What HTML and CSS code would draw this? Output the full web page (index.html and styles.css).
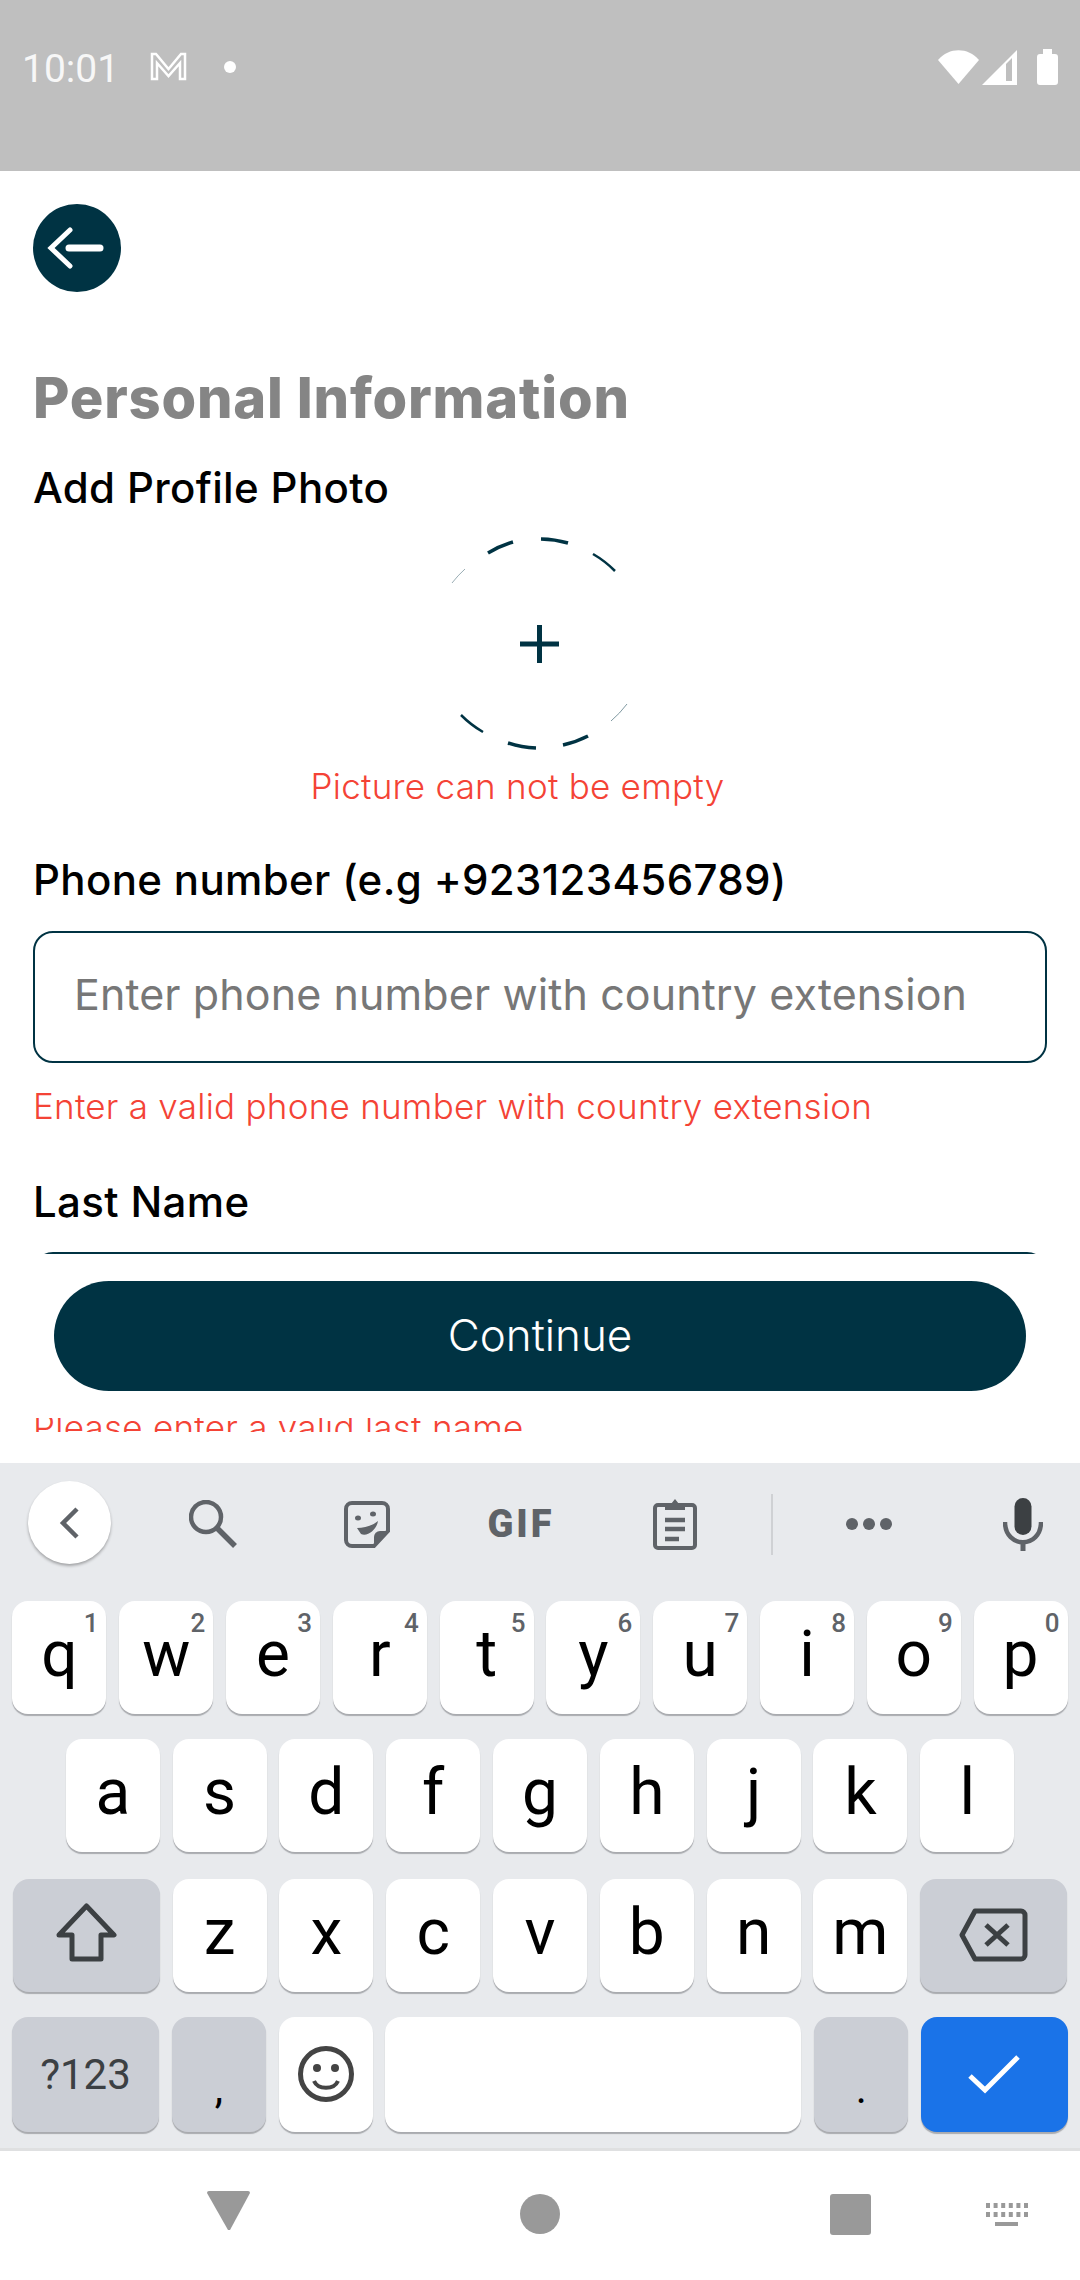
FILE: index.html
```html
<!DOCTYPE html>
<html lang="en">
<head>
    <meta charset="UTF-8">
    <meta name="viewport" content="width=device-width, initial-scale=1.0">
    <title>Personal Information</title>
    <link rel="stylesheet" href="styles.css">
</head>
<body>
<div class="screen">

    <!-- Status bar -->
    <div class="status">
        <span class="time">10:01</span>
        <svg class="gmail" width="37" height="29" viewBox="0 0 37 29"><path d="M2 2H6L18.500 17 31 2H35V27H30V11L18.500 24 7 11V27H2Z" fill="none" stroke="#fff" stroke-width="2.500"/></svg>
        <span class="status-dot"></span>
        <svg class="wifi" width="41" height="34" viewBox="0 0 41 34"><path d="M0 10C11-3 30-3 41 10L20.500 34Z" fill="#fff"/></svg>
        <svg class="signal" width="35" height="35" viewBox="0 0 35 35"><path d="M35 0V35H0Z" fill="#fff"/><path d="M24 14L30 8V31H24Z" fill="#bfbfbf"/></svg>
        <svg class="battery" width="21" height="36" viewBox="0 0 21 36"><path d="M6 0H15V5H18a3 3 0 0 1 3 3V33a3 3 0 0 1-3 3H3a3 3 0 0 1-3-3V8a3 3 0 0 1 3-3H6Z" fill="#fff"/></svg>
    </div>

    <!-- Form -->
    <div class="form">
        <div class="back-btn">
            <svg width="88" height="88" viewBox="0 0 88 88"><path d="M37 26L18 44 37 62" fill="none" stroke="#fff" stroke-width="5" stroke-linecap="round"/><path d="M36 44H67" stroke="#fff" stroke-width="7" stroke-linecap="round"/></svg>
        </div>
        <h1 class="title">Personal Information</h1>
        <div class="label label-photo">Add Profile Photo</div>
        <div class="photo">
            <svg width="280" height="260" viewBox="0 0 280 260">
                <g fill="none" stroke="#003343" stroke-width="3.500">
                    <path d="M88 43A105 105 0 0 1 113 32"/>
                    <path d="M141 29A105 105 0 0 1 168 33"/>
                    <path d="M193 44A105 105 0 0 1 215 61" stroke-width="2.500"/>
                    <path d="M52 73A105 105 0 0 1 65 59" stroke-width="1" opacity=".4"/>
                    <path d="M61 205A105 105 0 0 0 83 222" stroke-width="2.500"/>
                    <path d="M108 233A105 105 0 0 0 136 238"/>
                    <path d="M163 235A105 105 0 0 0 188 226"/>
                    <path d="M211 211A105 105 0 0 0 227 194" stroke-width="1" opacity=".5"/>
                </g>
                <path d="M139.500 115V153M120 134H159" stroke="#003343" stroke-width="5"/>
            </svg>
        </div>
        <div class="error error-photo">Picture can not be empty</div>
        <div class="label label-phone">Phone number (e.g +923123456789)</div>
        <div class="input">Enter phone number with country extension</div>
        <div class="error error-phone">Enter a valid phone number with country extension</div>
        <div class="label label-name">Last Name</div>
        <div class="input input-name"></div>
    </div>

    <!-- Continue -->
    <div class="footer">
        <button class="continue">Continue</button>
        <div class="clipped"><div class="error">Please enter a valid last name</div></div>
    </div>

    <!-- Keyboard -->
    <div class="keyboard">
        <div class="toolbar">
            <div class="kb-back">
                <svg width="24" height="34" viewBox="0 0 24 34"><path d="M19 3L5 17 19 31" fill="none" stroke="#5f6368" stroke-width="4.500"/></svg>
            </div>
            <div class="tool tool-search">
                <svg width="48" height="48" viewBox="0 0 48 48"><circle cx="17" cy="17" r="15" fill="none" stroke="#5f6368" stroke-width="4.500"/><path d="M28 28L46 46" stroke="#5f6368" stroke-width="5.500"/></svg>
            </div>
            <div class="tool">
                <svg width="46" height="47" viewBox="0 0 46 47"><path d="M8 2H38a6 6 0 0 1 6 6V30L30 45H8a6 6 0 0 1-6-6V8A6 6 0 0 1 8 2Z" fill="none" stroke="#5f6368" stroke-width="4"/><path d="M44 30L30 45V36a6 6 0 0 1 6-6Z" fill="#5f6368"/><ellipse cx="14" cy="17" rx="3" ry="2.500" fill="#5f6368"/><ellipse cx="29" cy="13" rx="3" ry="2.500" fill="#5f6368"/><path d="M13 27C20 27 28 25 34 20 33 28 24 36 17 33Z" fill="#5f6368"/></svg>
            </div>
            <div class="tool gif">GIF</div>
            <div class="tool">
                <svg width="44" height="52" viewBox="0 0 44 52"><rect x="2" y="7" width="40" height="43" rx="3" fill="none" stroke="#5f6368" stroke-width="4"/><path d="M12 12V6H18L22 1 26 6H32V12Z" fill="#5f6368"/><path d="M12 22H32M12 31H32M12 41H26" stroke="#5f6368" stroke-width="4.500"/></svg>
            </div>
            <div class="divider"></div>
            <div class="tool tool-dots">
                <svg width="48" height="12" viewBox="0 0 48 12"><circle cx="7" cy="6" r="6" fill="#5f6368"/><circle cx="24" cy="6" r="6" fill="#5f6368"/><circle cx="41" cy="6" r="6" fill="#5f6368"/></svg>
            </div>
            <div class="tool tool-mic">
                <svg width="40" height="53" viewBox="0 0 40 53"><rect x="11.500" y="0" width="17" height="37" rx="8.500" fill="#3c4043"/><path d="M2 24C2 51 38 51 38 24" fill="none" stroke="#5f6368" stroke-width="4.500"/><path d="M20 42V53" stroke="#5f6368" stroke-width="5"/></svg>
            </div>
        </div>

        <div class="keys">
            <div class="row">
                <div class="key">q<span class="hint">1</span></div>
                <div class="key">w<span class="hint">2</span></div>
                <div class="key">e<span class="hint">3</span></div>
                <div class="key">r<span class="hint">4</span></div>
                <div class="key">t<span class="hint">5</span></div>
                <div class="key">y<span class="hint">6</span></div>
                <div class="key">u<span class="hint">7</span></div>
                <div class="key">i<span class="hint">8</span></div>
                <div class="key">o<span class="hint">9</span></div>
                <div class="key">p<span class="hint">0</span></div>
            </div>
            <div class="row row-home">
                <div class="key">a</div>
                <div class="key">s</div>
                <div class="key">d</div>
                <div class="key">f</div>
                <div class="key">g</div>
                <div class="key">h</div>
                <div class="key">j</div>
                <div class="key">k</div>
                <div class="key">l</div>
            </div>
            <div class="row row-third">
                <div class="key key-fn key-wide">
                    <svg width="61" height="59" viewBox="0 0 61 59"><path d="M30.500 3L58 32H45V56H16V32H3Z" fill="none" stroke="#3c4043" stroke-width="5" stroke-linejoin="round"/></svg>
                </div>
                <div class="key">z</div>
                <div class="key">x</div>
                <div class="key">c</div>
                <div class="key">v</div>
                <div class="key">b</div>
                <div class="key">n</div>
                <div class="key">m</div>
                <div class="key key-fn key-wide key-del">
                    <svg width="69" height="54" viewBox="0 0 69 54"><path d="M16 3H62a4 4 0 0 1 4 4V47a4 4 0 0 1-4 4H16L3 27Z" fill="none" stroke="#3c4043" stroke-width="5" stroke-linejoin="round"/><path d="M27 17L49 37M49 17L27 37" stroke="#3c4043" stroke-width="5"/></svg>
                </div>
            </div>
            <div class="row row-bottom">
                <div class="key key-fn key-wide key-sym">?123</div>
                <div class="key key-fn key-punct">,</div>
                <div class="key key-emoji">
                    <svg width="56" height="56" viewBox="0 0 56 56"><circle cx="28" cy="28" r="25.500" fill="none" stroke="#444" stroke-width="5"/><circle cx="19" cy="22" r="4" fill="#444"/><circle cx="37" cy="22" r="4" fill="#444"/><path d="M16 35C20 44 36 44 40 35" fill="none" stroke="#444" stroke-width="4"/></svg>
                </div>
                <div class="key key-space"></div>
                <div class="key key-fn key-punct">.</div>
                <div class="key key-enter key-wide">
                    <svg width="52" height="39" viewBox="0 0 52 39"><path d="M2 21L17 35 50 2" fill="none" stroke="#fff" stroke-width="5"/></svg>
                </div>
            </div>
        </div>
    </div>

    <!-- Navigation bar -->
    <div class="nav">
        <svg class="nav-back" width="43" height="39" viewBox="0 0 43 39"><path d="M2 0H41a2 2 0 0 1 2 2L23 39H21L0 2A2 2 0 0 1 2 0Z" fill="#999"/></svg>
        <span class="nav-home"></span>
        <span class="nav-recent"></span>
        <svg class="nav-kb" width="42" height="23" viewBox="0 0 42 23"><path d="M0 2.500H42M0 11.500H42" stroke="#999" stroke-width="5" stroke-dasharray="4 3.600"/><path d="M9 21H32" stroke="#999" stroke-width="4"/></svg>
    </div>

</div>
</body>
</html>
```
FILE: styles.css
```css
* {
    box-sizing: border-box;
}
body {
    margin: 0;
    background-color: #fff;
    font-family: Inter, sans-serif;
}
.screen {
    width: 1080px;
    height: 2280px;
    display: flex;
    flex-direction: column;
    overflow: hidden;
}

/* status bar */
.status {
    height: 171px;
    flex: none;
    background-color: #bfbfbf;
    display: flex;
    align-items: flex-start;
    padding-top: 49px;
    color: #f7f7f7;
}
.time {
    margin-left: 22px;
    font-family: Roboto, sans-serif;
    font-size: 39px;
    line-height: 40px;
}
.gmail {
    margin-left: 31px;
    margin-top: 3px;
}
.status-dot {
    width: 12px;
    height: 12px;
    margin-left: 37px;
    margin-top: 12px;
    border-radius: 50%;
    background-color: #fff;
}
.wifi {
    margin-left: 702px;
    margin-top: 1px;
}
.signal {
    margin-left: 3px;
    margin-top: 1px;
}
.battery {
    margin-left: 20px;
}

/* form */
.form {
    height: 1083px;
    flex: none;
    overflow: hidden;
    padding: 33px 33px 0;
}
.back-btn {
    width: 88px;
    height: 88px;
    border-radius: 50%;
    background-color: #003343;
}
.back-btn svg {
    display: block;
}
.title {
    margin: 76px 0 0;
    font-size: 56px;
    line-height: 60px;
    font-weight: 800;
    letter-spacing: 0.8px;
    color: #858585;
}
.label {
    font-size: 42px;
    line-height: 44px;
    font-weight: 500;
    letter-spacing: 0.35px;
    color: #000;
}
.label-photo {
    margin-top: 38px;
}
.photo {
    display: flex;
    justify-content: center;
}
.photo svg {
    display: block;
}
.error {
    font-size: 35px;
    line-height: 40px;
    font-weight: 300;
    letter-spacing: 0.25px;
    color: #f44336;
    white-space: nowrap;
}
.error-photo {
    margin-top: -4px;
    padding-right: 45px;
    text-align: center;
}
.label-phone {
    margin-top: 52px;
}
.input {
    height: 132px;
    margin-top: 29px;
    padding: 39px 39px 0;
    border: 2px solid #003343;
    border-radius: 20px;
    font-size: 43px;
    line-height: 44px;
    letter-spacing: 0.1px;
    color: #777;
    white-space: nowrap;
}
.error-phone {
    margin-top: 23px;
}
.label-name {
    margin-top: 54px;
}
.input-name {
    margin-top: 28px;
}

/* continue */
.footer {
    height: 209px;
    flex: none;
    padding-top: 27px;
}
.continue {
    display: block;
    width: 972px;
    height: 110px;
    margin: 0 auto;
    padding-bottom: 4px;
    border: none;
    border-radius: 55px;
    background-color: #003343;
    color: #fff;
    font-family: Inter, sans-serif;
    font-size: 44px;
    font-weight: 300;
}
.clipped {
    height: 14px;
    margin: 27px 0 0 33px;
    overflow: hidden;
}
.clipped .error {
    margin-top: -11px;
}

/* keyboard */
.keyboard {
    height: 688px;
    flex: none;
    background-color: #e8eaed;
    border-bottom: 3px solid #dfe0e1;
}
.toolbar {
    height: 138px;
    display: flex;
    align-items: center;
    padding-bottom: 16px;
}
.kb-back {
    width: 83px;
    height: 83px;
    margin-left: 28px;
    margin-bottom: 3px;
    border-radius: 50%;
    background-color: #fff;
    box-shadow: 0 2px 3px rgba(0, 0, 0, 0.3);
    display: flex;
    align-items: center;
    justify-content: center;
}
.tool {
    width: 100px;
    margin-left: 54px;
    display: flex;
    align-items: center;
    justify-content: center;
}
.tool svg {
    display: block;
}
.tool-search {
    margin-left: 52px;
}
.gif {
    font-family: Roboto, sans-serif;
    font-size: 38px;
    line-height: 40px;
    font-weight: 900;
    letter-spacing: 3px;
    color: #5f6368;
}
.divider {
    width: 2px;
    height: 61px;
    margin-left: 46px;
    background-color: #cfd1d4;
}
.tool-dots {
    margin-left: 46px;
}
.keys {
    padding: 0 12px;
    display: flex;
    flex-direction: column;
    gap: 25px;
}
.row {
    height: 113px;
    display: flex;
    justify-content: center;
    gap: 12.8px;
}
.row-third {
    margin-top: 2px;
}
.row-bottom {
    height: 115px;
}
.key {
    position: relative;
    width: 94px;
    flex: none;
    padding-bottom: 7px;
    display: flex;
    align-items: center;
    justify-content: center;
    border-radius: 16px;
    background-color: #fff;
    box-shadow: 0 2px 1px #a9abaf;
    font-family: Roboto, sans-serif;
    font-size: 64px;
    color: #000;
}
.key svg {
    display: block;
}
.hint {
    position: absolute;
    top: 9px;
    right: 8px;
    font-size: 26px;
    line-height: 26px;
    font-weight: 500;
    color: #5f6368;
}
.key-fn {
    background-color: #cbced5;
}
.key-wide {
    width: 147px;
}
.key-del {
    padding-bottom: 2px;
}
.key-sym {
    padding-bottom: 0;
    font-size: 42px;
    color: #3c4043;
}
.key-punct {
    font-size: 42px;
    padding-top: 28px;
    padding-bottom: 0;
}
.key-emoji {
    padding-bottom: 2px;
}
.key-space {
    width: 416px;
}
.key-enter {
    padding-bottom: 0;
    background-color: #1a73e8;
}

/* navigation bar */
.nav {
    flex: 1;
    display: flex;
    align-items: flex-start;
    padding-top: 40px;
}
.nav-back {
    margin-left: 207px;
}
.nav-home {
    width: 40px;
    height: 40px;
    margin-left: 270px;
    margin-top: 3px;
    border-radius: 50%;
    background-color: #999;
}
.nav-recent {
    width: 41px;
    height: 41px;
    margin-left: 270px;
    margin-top: 3px;
    border-radius: 3px;
    background-color: #999;
}
.nav-kb {
    margin-left: 115px;
    margin-top: 12px;
}
```
